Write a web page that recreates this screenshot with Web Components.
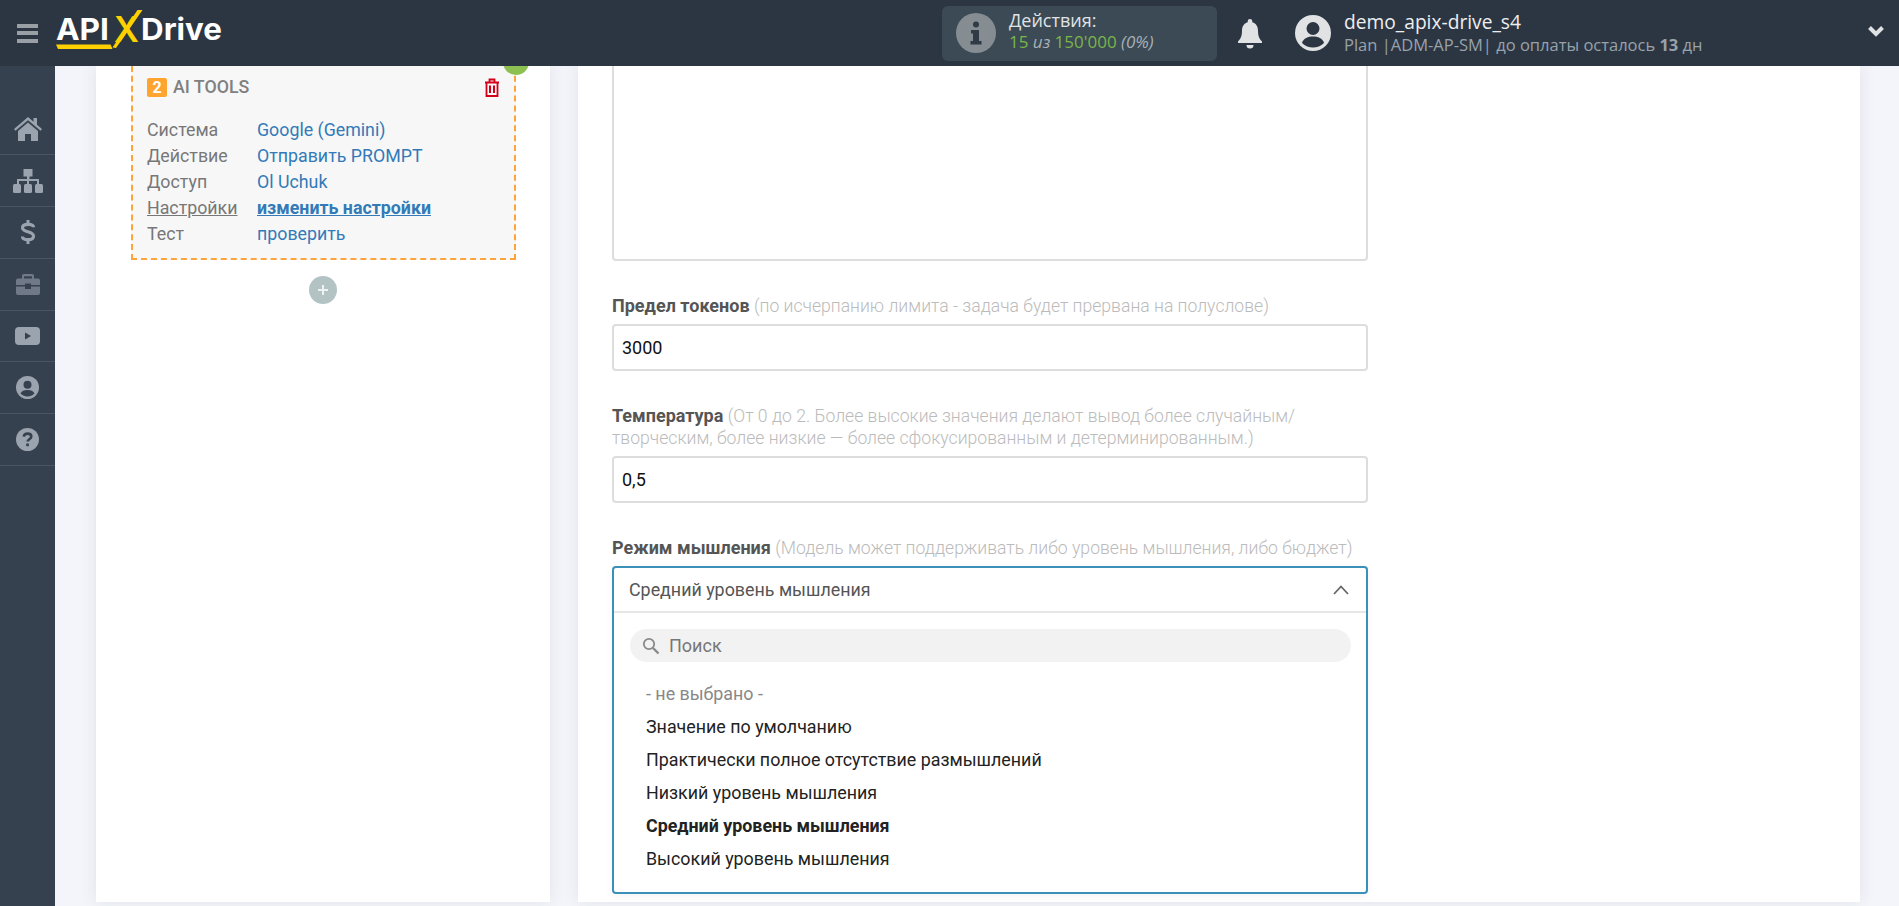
<!DOCTYPE html>
<html lang="ru"><head><meta charset="utf-8"><title>ApiX-Drive</title>
<style>
html,body{margin:0;height:906px;overflow:hidden;background:#f3f5fa;font-family:Roboto,"Liberation Sans",sans-serif}
</style></head><body>
<app-shell>
  <app-header slot="header"></app-header>
  <side-nav slot="nav"></side-nav>
  <page-card slot="left" style="width:454px">
    <step-box num="2" title="AI TOOLS">
      <step-row label="Система">Google (Gemini)</step-row>
      <step-row label="Действие">Отправить PROMPT</step-row>
      <step-row label="Доступ">Ol Uchuk</step-row>
      <step-row label="Настройки" active>изменить настройки</step-row>
      <step-row label="Тест">проверить</step-row>
    </step-box>
    <add-button></add-button>
  </page-card>
  <page-card slot="right" style="width:1282px;padding:0 34px;box-sizing:border-box">
    <text-box multi></text-box>
    <form-field label="Предел токенов" hint="(по исчерпанию лимита - задача будет прервана на полуслове)"><text-box value="3000"></text-box></form-field>
    <form-field label="Температура" hint="(От 0 до 2. Более высокие значения делают вывод более случайным/<br>творческим, более низкие — более сфокусированным и детерминированным.)"><text-box value="0,5"></text-box></form-field>
    <form-field label="Режим мышления" hint="(Модель может поддерживать либо уровень мышления, либо бюджет)">
      <think-select value="Средний уровень мышления">
        <select-option muted>- не выбрано -</select-option>
        <select-option>Значение по умолчанию</select-option>
        <select-option>Практически полное отсутствие размышлений</select-option>
        <select-option>Низкий уровень мышления</select-option>
        <select-option selected>Средний уровень мышления</select-option>
        <select-option>Высокий уровень мышления</select-option>
      </think-select>
    </form-field>
  </page-card>
</app-shell>
<script>
function def(name, html){
  customElements.define(name, class extends HTMLElement{
    constructor(){super();this.attachShadow({mode:'open'});}
    connectedCallback(){
      this.shadowRoot.innerHTML = typeof html==='function'?html(this):html;
    }
  });
}
const a=(el,n)=>el.getAttribute(n)||'';

def('app-shell',`<style>
:host{display:grid;grid-template-columns:55px 1fr;grid-template-rows:66px 1fr;height:906px;overflow:hidden}
.h{grid-column:1/3;position:relative;z-index:2}
main{display:flex;gap:28px;padding:0 0 0 41px;overflow:hidden;min-height:0}
</style>
<div class="h"><slot name="header"></slot></div>
<slot name="nav"></slot>
<main><slot name="left"></slot><slot name="right"></slot></main>`);

def('app-header',`<style>
:host{display:flex;align-items:center;height:66px;background:#2c3643;color:#fff;font-family:"Open Sans",sans-serif;position:relative}
.burger{width:21px;margin-left:17px;display:flex;flex-direction:column;gap:3.5px}
.burger i{display:block;height:4px;background:#9a9fa6}
.logo{display:block;margin-left:18px;flex:none}
.acts{margin-left:716px;width:275px;height:55px;background:#3b4a55;border-radius:6px;display:flex;align-items:center;box-sizing:border-box;padding-left:14px;gap:13px;flex:none}
.acts .t{font-size:18px;line-height:22px;color:#e0e3e5;padding-bottom:4px}
.acts .s{font-size:17px;color:#7ab648}
.acts em{color:#a9b1b7}
.bell{margin-left:20px;display:flex}
.user{margin-left:32px;display:flex;align-items:center;gap:13px}
.name{font-size:19.200px;line-height:23px;color:#eceef0}
.plan{font-size:16.500px;line-height:23px;color:#98a2aa;white-space:nowrap}
.plan b{font-weight:700}
.chev{position:absolute;left:1867px;top:25px}
</style>
<div class="burger"><i></i><i></i><i></i></div>
<svg class="logo" width="170" height="66" viewBox="0 0 170 66">
  <g font-family="Inter" font-weight="700" font-size="30" fill="#fff">
    <text x="0" y="40" textLength="53" lengthAdjust="spacingAndGlyphs">API</text>
    <text x="85" y="40" textLength="81" lengthAdjust="spacingAndGlyphs">Drive</text>
  </g>
  <text x="58" y="42" font-family="Inter" font-weight="600" font-size="36" fill="#ffd000" textLength="25" lengthAdjust="spacingAndGlyphs">X</text>
  <path d="M56.500 47.500L81.500 10h5L60 48z" fill="#ffd000"/>
  <path d="M0 44.500h54.500l2 4.500H2z" fill="#ffd000"/>
</svg>
<div class="acts">
  <svg width="40" height="40" viewBox="0 0 40 40"><circle cx="20" cy="20" r="20" fill="#858d92"/><circle cx="20" cy="11.500" r="3" fill="#2f3a44"/><path d="M15 17h8v11h2.500v3.500h-11V28H17v-7.500h-2z" fill="#2f3a44"/></svg>
  <div class="t"><div>Действия:</div><div class="s">15 <em>из</em> 150'000 <em>(0%)</em></div></div>
</div>
<div class="bell"><svg width="26" height="31" viewBox="0 0 26 31"><path d="M13 1a2.300 2.300 0 0 0-2.300 2.300v.9C6.800 5.300 5 8.700 5 12.500c0 6-1.500 8.500-4 11v1.500h24v-1.500c-2.500-2.500-4-5-4-11 0-3.800-1.800-7.200-5.700-8.300v-.9A2.300 2.300 0 0 0 13 1z" fill="#e0e2e4"/><path d="M9.500 27h7a3.500 3.500 0 0 1-7 0z" fill="#e0e2e4"/></svg></div>
<div class="user">
  <svg width="36" height="36" viewBox="0 0 36 36"><circle cx="18" cy="18" r="18" fill="#e0e2e4"/><circle cx="18" cy="13.500" r="6.500" fill="#2c3643"/><path d="M7 28c1.500-5 6-6.500 11-6.500S27.500 23 29 28c-3 3-7 4.500-11 4.500S10 31 7 28z" fill="#2c3643"/></svg>
  <div><div class="name">demo_apix-drive_s4</div><div class="plan">Plan |ADM-AP-SM| до оплаты осталось <b>13</b> дн</div></div>
</div>
<svg class="chev" width="18" height="12" viewBox="0 0 18 12"><path d="M2.500 2.500L9 9l6.500-6.500" fill="none" stroke="#e0e2e4" stroke-width="4"/></svg>`);

const icons={
home:`<svg width="28" height="24" viewBox="0 0 28 24"><path d="M14 0L0 12l1.500 1.800L14 3.200l12.500 10.600L28 12l-5-4.300V1h-3.500v3.700z" fill="#9aa3ae"/><path d="M14 5.500L4 14v10h7v-7h6v7h7V14z" fill="#9aa3ae"/></svg>`,
site:`<svg width="30" height="24" viewBox="0 0 30 24"><path d="M10.500 0h9v7.500h-3V10h9.500v5h-2v-3H16v3h-2v-3H6v3H4v-5h10V7.500h-3.500z" fill="#9aa3ae"/><rect y="15" width="8" height="9" rx="1.500" fill="#9aa3ae"/><rect x="11" y="15" width="8" height="9" rx="1.500" fill="#9aa3ae"/><rect x="22" y="15" width="8" height="9" rx="1.500" fill="#9aa3ae"/></svg>`,
usd:`<svg width="16" height="26" viewBox="0 0 16 26"><path d="M13.500 8.200C13.500 6.200 11.500 5.300 8 5.300S2.500 6.500 2.500 8.700c0 5.300 11 2.800 11 8.500 0 2.300-2.200 3.500-5.500 3.500s-5.500-1-5.500-3.200" fill="none" stroke="#9aa3ae" stroke-width="3.200"/><path d="M6.500 1h3v5h-3zM6.500 20h3v5h-3z" fill="#9aa3ae"/></svg>`,
case:`<svg width="24" height="21" viewBox="0 0 24 21"><path d="M8 0h8a2 2 0 0 1 2 2v2.500h4a2 2 0 0 1 2 2V11H15V9.500H9V11H0V6.500a2 2 0 0 1 2-2h4V2a2 2 0 0 1 2-2zm0 2.200v2.300h8V2.200z" fill="#6f7987"/><path d="M0 12.500h9V15h6v-2.500h9V19a2 2 0 0 1-2 2H2a2 2 0 0 1-2-2z" fill="#6f7987"/></svg>`,
yt:`<svg width="25" height="18" viewBox="0 0 25 18"><rect width="25" height="18" rx="4" fill="#9aa3ae"/><path d="M10 5.500l6 3.500-6 3.500z" fill="#364150"/></svg>`,
user:`<svg width="23" height="23" viewBox="0 0 23 23"><circle cx="11.500" cy="11.500" r="11.500" fill="#9aa3ae"/><circle cx="11.500" cy="8.800" r="4" fill="#364150"/><path d="M4.500 17.500c1-2.500 3.500-3.500 7-3.500s6 1 7 3.500c-2 2-4.500 3-7 3s-5-1-7-3z" fill="#364150"/></svg>`,
help:`<svg width="23" height="23" viewBox="0 0 23 23"><circle cx="11.500" cy="11.500" r="11.500" fill="#9aa3ae"/><path d="M7.800 8.600c.3-2 1.800-3 3.800-3 2.200 0 3.700 1.200 3.700 3 0 2.700-3.700 2.600-3.700 5" fill="none" stroke="#364150" stroke-width="2.600"/><rect x="10.200" y="15.500" width="2.700" height="2.700" fill="#364150"/></svg>`};

def('side-nav',`<style>
:host{display:block;background:#364150;height:100%;padding-top:37.500px;box-sizing:border-box;position:relative;z-index:1}
div{height:50.800px;display:flex;align-items:center;justify-content:center;border-bottom:1px solid #4a5563}
</style>`+Object.values(icons).map(i=>`<div>${i}</div>`).join(''));

def('page-card',`<style>
:host{display:block;background:#fff;box-shadow:0 0 16px rgba(30,40,60,.09);overflow:hidden;height:836px;flex:none}
</style><slot></slot>`);

def('step-box',el=>`<style>
:host{display:block;position:relative;margin:-10px 34px 0 35px;height:200px;background:#f7f7f7;border:2px dashed #ffa43a;padding:0 14px}
.t{display:flex;align-items:center;height:20px;margin-top:18px;margin-bottom:20px;padding-top:1px}
.n{width:20px;height:19px;background:#ffa52f;color:#fff;border-radius:2px;font:700 16px/19px Roboto,sans-serif;text-align:center;margin-right:6px}
.l{font:500 17.800px/20px Roboto,sans-serif;color:#808080;flex:1}
.g{position:absolute;right:-15px;top:-9px;width:26px;height:26px;border-radius:50%;background:#8cc152}
</style>
<div class="g"></div>
<div class="t"><span class="n">${a(el,'num')}</span><span class="l">${a(el,'title')}</span>
<svg width="16" height="19" viewBox="0 0 16 19"><path d="M1 4.500h14M5.500 4V1.500h5V4" fill="none" stroke="#d4001a" stroke-width="1.800"/><path d="M2.500 5v13h11V5" fill="none" stroke="#d4001a" stroke-width="1.800"/><path d="M6 7.500v7.500M10 7.500v7.500" stroke="#d4001a" stroke-width="2"/></svg></div>
<slot></slot>`);

def('step-row',el=>{const on=el.hasAttribute('active');return `<style>
:host{display:flex;font:400 17.800px/26px Roboto,sans-serif;height:26px;white-space:nowrap}
.k{width:110px;flex:none;color:#777;${on?'text-decoration:underline':''}}
.v{color:#337ab7;${on?'font-weight:700;text-decoration:underline':''}}
</style><span class="k">${a(el,'label')}</span><span class="v"><slot></slot></span>`});

def('add-button',`<style>
:host{display:flex;align-items:center;justify-content:center;width:28px;height:28px;border-radius:50%;background:#b3c3c4;margin:16px auto 0}
svg{display:block}
</style><svg width="12" height="12" viewBox="0 0 12 12"><path d="M5 1h2v4h4v2H7v4H5V7H1V5h4z" fill="#eef2f2"/></svg>`);

def('text-box',el=>{const m=el.hasAttribute('multi');return `<style>
:host{display:block;box-sizing:border-box;height:${m?'205px':'47px'};${m?'margin:-10px 0 1px;':''}border:2px solid #ddd;border-radius:4px;background:#fff;padding:0 8px;font:400 18px/43px Roboto,sans-serif;color:#111;width:756px}
</style>${a(el,'value')}`});

def('form-field',el=>`<style>
:host{display:block;margin-top:34px;width:756px}
label{display:block;font:300 17.600px/22px Roboto,sans-serif;color:#bbb;margin-bottom:7px;white-space:nowrap}
b{font-weight:700;color:#555;font-size:18px}
</style><label><b>${a(el,'label')}</b> ${a(el,'hint')}</label><slot></slot>`);

def('think-select',el=>`<style>
:host{display:block;box-sizing:border-box;height:328px;border:2px solid #3a90b8;border-radius:4px;background:#fff;width:756px;box-shadow:0 2px 8px rgba(0,0,0,.05)}
.top{display:flex;align-items:center;justify-content:space-between;height:43px;padding:0 17px 0 15px;border-bottom:2px solid #e6e6e6;font:400 17.850px/43px Roboto,sans-serif;color:#555}
.s{display:flex;align-items:center;margin:16px 15px 15px 16px;height:33px;border-radius:17px;background:#f2f2f2;padding-left:12px;font:400 18px/33px Roboto,sans-serif;color:#777;gap:9px}
</style>
<div class="top"><span>${a(el,'value')}</span><svg width="16" height="10" viewBox="0 0 16 10"><path d="M1 9l7-7.500L15 9" fill="none" stroke="#666" stroke-width="1.800"/></svg></div>
<div class="s"><svg width="18" height="18" viewBox="0 0 18 18"><circle cx="7" cy="7" r="5.200" fill="none" stroke="#8a8a8a" stroke-width="1.800"/><path d="M11 11l5.500 5.500" stroke="#8a8a8a" stroke-width="2.400"/></svg><span>Поиск</span></div>
<slot></slot>`);

def('select-option',el=>`<style>
:host{display:block;padding-left:32px;height:33px;font:${el.hasAttribute('selected')?700:400} 17.850px/33px Roboto,sans-serif;color:${el.hasAttribute('muted')?'#888':'#222'}}
</style><slot></slot>`);
</script>
</body></html>
